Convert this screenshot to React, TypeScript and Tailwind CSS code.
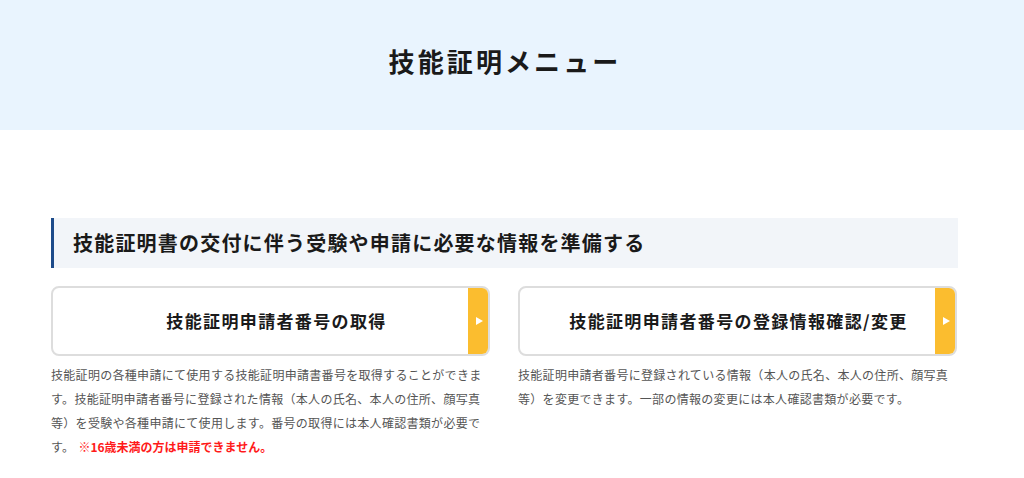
import React from "react";

const font = { fontFamily: '"Noto Sans CJK JP", "Noto Sans", sans-serif' };

function Card({ title, desc, shift }: { title: string; desc: React.ReactNode; shift: string }) {
  return (
    <div className="flex flex-col w-[439px]">
      <div className="flex h-[70px] rounded-[8px] border-2 border-[#dddddd] bg-white overflow-hidden">
        <div className={`flex-1 flex items-center justify-center ${shift}`}>
          <span className="text-[17px] font-bold tracking-[0.08em] text-[#1a1a1a]">{title}</span>
        </div>
        <div className="w-[20px] bg-[#fbbd2f] flex items-center justify-center">
          <div className="w-0 h-0 border-y-[4px] border-y-transparent border-l-[7px] border-l-white ml-[2px]" />
        </div>
      </div>
      <p className="mt-[7px] text-[12px] leading-[24px] tracking-[0.025em] text-[#555555]">{desc}</p>
    </div>
  );
}

export default function App() {
  return (
    <div className="w-[1024px] h-[478px] bg-white overflow-hidden" style={font}>
      <div className="h-[130px] bg-[#e9f4fe] flex items-center justify-center">
        <h1 className="text-[26px] font-bold tracking-[0.12em] text-[#1a1a1a] mr-[14px] pb-[10px]">技能証明メニュー</h1>
      </div>
      <div className="ml-[51px] w-[907px] mt-[88px]">
        <div className="h-[50px] bg-[#f2f5f9] border-l-[3px] border-[#1d4b8a] flex items-center pl-[19px]">
          <h2 className="text-[20px] font-bold tracking-[0.06em] text-[#1a1a1a]">
            技能証明書の交付に伴う受験や申請に必要な情報を準備する
          </h2>
        </div>
        <div className="flex gap-[28px] mt-[18px]">
          <Card
            shift="pl-[32px]"
            title="技能証明申請者番号の取得"
            desc={
              <>
                技能証明の各種申請にて使用する技能証明申請書番号を取得することができます。技能証明申請者番号に登録された情報（本人の氏名、本人の住所、顔写真等）を受験や各種申請にて使用します。番号の取得には本人確認書類が必要です。
                <span className="ml-[4px] font-bold text-[#ff1a1a] tracking-normal">※16歳未満の方は申請できません。</span>
              </>
            }
          />
          <Card
            shift="pl-[22px]"
            title="技能証明申請者番号の登録情報確認/変更"
            desc="技能証明申請者番号に登録されている情報（本人の氏名、本人の住所、顔写真等）を変更できます。一部の情報の変更には本人確認書類が必要です。"
          />
        </div>
      </div>
    </div>
  );
}
